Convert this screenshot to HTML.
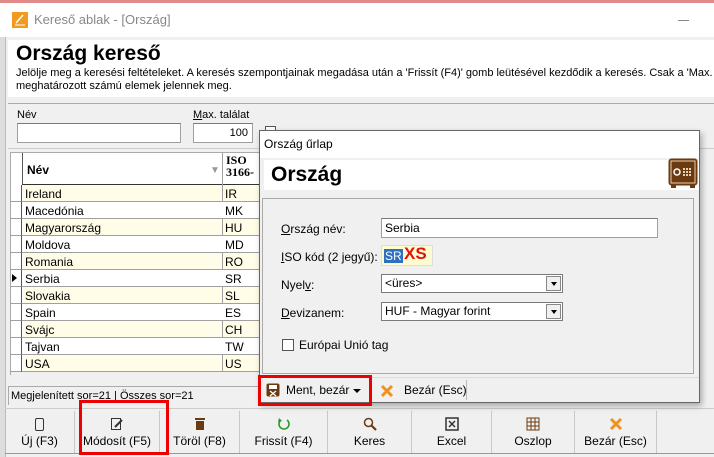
<!DOCTYPE html>
<html><head><meta charset="utf-8"><style>
*{box-sizing:border-box;margin:0;padding:0}
body{width:714px;height:457px;overflow:hidden;background:#f0f0f0;font-family:"Liberation Sans","DejaVu Sans",sans-serif;font-size:12px;color:#000;position:relative}
.a{position:absolute}
.inp{position:absolute;background:#fff;border:1px solid #a0a0a0;border-top-color:#7a7a7a}
.row{position:absolute;left:22px;width:243px;height:17px;border-bottom:1px solid #a0a0a0;font-size:12px;line-height:18px}
.row span{position:absolute;left:3px}
.row b{font-weight:normal;position:absolute;left:203px}
.ind{position:absolute;left:10px;width:12px;height:17px;border-bottom:1px solid #a0a0a0;border-right:1px solid #555}
.tb{position:absolute;top:411px;height:42px;text-align:center;font-size:12px;border-right:1px solid #c8c8c8}
.tb .ic{height:20px;margin-top:3px;display:flex;justify-content:center;align-items:center}
u{text-decoration:underline}
.sel{position:absolute;left:381px;width:182px;height:19px;background:#fff;border:1px solid #7a7a7a;padding-left:3px;line-height:17px}
.sel .dd{position:absolute;right:1px;top:1px;width:15px;height:15px;border:1px solid #888;background:#f0f0f0}
.sel .dd:after{content:"";position:absolute;left:4px;top:5px;border:3px solid transparent;border-top:4px solid #000}
</style></head><body>
<div class="a" style="left:0;top:0;width:714px;height:3px;background:#e08a8a"></div>
<div class="a" style="left:0;top:3px;width:714px;height:34px;background:#fff"></div>
<svg class="a" style="left:12px;top:12px" width="16" height="16"><rect width="16" height="16" fill="#f29a1e"/><path d="M4 11 L11 3" stroke="#fff" stroke-width="1.5"/><path d="M3 13 H13" stroke="#fff" stroke-width="1"/></svg>
<div class="a" style="left:34px;top:12px;color:#888;font-size:13px">Kereső ablak - [Ország]</div>
<div class="a" style="left:678px;top:20px;width:11px;height:1px;background:#888"></div>
<div class="a" style="left:0;top:37px;width:6px;height:420px;background:#ddd;border-right:1px solid #bbb"></div>
<div class="a" style="left:8px;top:40px;width:706px;height:57px;background:#fff"></div>
<div class="a" style="left:16px;top:42px;font-size:21px;font-weight:bold">Ország kereső</div>
<div class="a" style="left:16px;top:67px;font-size:11px;line-height:13px;white-space:nowrap">Jelölje meg a keresési feltételeket. A keresés szempontjainak megadása után a 'Frissít (F4)' gomb leütésével kezdődik a keresés. Csak a 'Max. találat<br>meghatározott számú elemek jelennek meg.</div>
<div class="a" style="left:8px;top:103px;width:706px;height:46px;border-top:1px solid #aaa;border-bottom:1px solid #ccc"></div>
<div class="a" style="left:17px;top:109px;font-size:11px">Név</div>
<div class="inp" style="left:17px;top:123px;width:164px;height:20px"></div>
<div class="a" style="left:193px;top:109px;font-size:11px"><u>M</u>ax. találat</div>
<div class="inp" style="left:193px;top:123px;width:60px;height:20px;text-align:right;padding:3px 4px;font-size:11px">100</div>
<div class="a" style="left:265px;top:126px;width:11px;height:11px;border:1px solid #555;background:#fff"></div>
<div class="a" style="left:10px;top:152px;width:256px;height:223px;background:#fff;border:1px solid #aaa"></div>
<div class="a" style="left:22px;top:153px;width:1px;height:32px;background:#555"></div>
<div class="a" style="left:22px;top:184px;width:244px;height:1px;background:#333"></div>
<div class="a" style="left:27px;top:163px;font-weight:bold;font-size:12px">Név</div>
<div class="a" style="left:210px;top:165px;color:#999;font-size:10px">▼</div>
<div class="a" style="left:222px;top:153px;width:1px;height:222px;background:#a0a0a0"></div>
<div class="a" style="left:226px;top:154px;font-weight:bold;font-family:'Liberation Serif',serif;font-size:12px;line-height:12px">ISO<br>3166-</div>
<div class="a" style="left:23px;top:185px;width:199px;height:187px;background:#fffde8"></div>
<div class="a" style="left:223px;top:185px;width:43px;height:187px;background:#fffde8"></div>
<div class="row" style="top:185px"><span>Ireland</span><b>IR</b></div><div class="ind" style="top:185px"></div>
<div class="row" style="top:202px;background:#fff"><span>Macedónia</span><b>MK</b></div><div class="ind" style="top:202px"></div>
<div class="row" style="top:219px"><span>Magyarország</span><b>HU</b></div><div class="ind" style="top:219px"></div>
<div class="row" style="top:236px;background:#fff"><span>Moldova</span><b>MD</b></div><div class="ind" style="top:236px"></div>
<div class="row" style="top:253px"><span>Romania</span><b>RO</b></div><div class="ind" style="top:253px"></div>
<div class="row" style="top:270px;background:#fff"><span>Serbia</span><b>SR</b></div><div class="ind" style="top:270px"><div class="a" style="left:2px;top:4px;border:4px solid transparent;border-left:5px solid #000"></div></div>
<div class="row" style="top:287px"><span>Slovakia</span><b>SL</b></div><div class="ind" style="top:287px"></div>
<div class="row" style="top:304px;background:#fff"><span>Spain</span><b>ES</b></div><div class="ind" style="top:304px"></div>
<div class="row" style="top:321px"><span>Svájc</span><b>CH</b></div><div class="ind" style="top:321px"></div>
<div class="row" style="top:338px;background:#fff"><span>Tajvan</span><b>TW</b></div><div class="ind" style="top:338px"></div>
<div class="row" style="top:355px"><span>USA</span><b>US</b></div><div class="ind" style="top:355px"></div>
<div class="a" style="left:11px;top:372px;width:254px;height:3px;background:#f0f0f0"></div>
<div class="a" style="left:8px;top:386px;width:260px;height:19px;border-top:1px solid #aaa;border-left:1px solid #aaa;font-size:11px;padding:3px 2px">Megjelenített sor=21 | Összes sor=21</div>
<div class="a" style="left:5px;top:408px;width:709px;height:1px;background:#ccc"></div>
<div class="a" style="left:5px;top:453px;width:709px;height:1px;background:#999"></div>
<div class="tb" style="left:5px;width:70px"><div class="ic"><div style="width:9px;height:13px;border:1.5px solid #333;border-radius:2px"></div></div>Új (F3)</div>
<div class="tb" style="left:75px;width:85px"><div class="ic"><svg width="14" height="14"><rect x="1.5" y="1.5" width="9" height="11" fill="none" stroke="#333"/><path d="M5 10 L12 3" stroke="#333" stroke-width="2"/></svg></div>Módosít (F5)</div>
<div class="tb" style="left:160px;width:80px"><div class="ic"><svg width="12" height="14"><rect x="1" y="1" width="10" height="2" fill="#6b3a10"/><rect x="2" y="4" width="8" height="9" fill="#6b3a10"/></svg></div>Töröl (F8)</div>
<div class="tb" style="left:240px;width:88px"><div class="ic"><svg width="14" height="14"><path d="M4 3 A5 5 0 1 0 10 3" fill="none" stroke="#2a9a2a" stroke-width="1.6"/><path d="M2 1 L5 4 L1 5Z" fill="#2a9a2a"/></svg></div>Frissít (F4)</div>
<div class="tb" style="left:328px;width:84px"><div class="ic"><svg width="14" height="14"><circle cx="5.5" cy="5.5" r="4" fill="none" stroke="#6b3a10" stroke-width="1.5"/><path d="M8.5 8.5L13 13" stroke="#6b3a10" stroke-width="2.2"/></svg></div>Keres</div>
<div class="tb" style="left:412px;width:80px"><div class="ic"><svg width="14" height="14"><rect x="1" y="1" width="12" height="12" fill="none" stroke="#333" stroke-width="1.5"/><path d="M4 4L10 10M10 4L4 10" stroke="#333" stroke-width="1.5"/></svg></div>Excel</div>
<div class="tb" style="left:492px;width:83px"><div class="ic"><svg width="14" height="14" stroke="#6b3a10" fill="none"><rect x="1" y="1" width="12" height="12"/><path d="M1 5H13M1 9H13M5 1V13M9 1V13"/></svg></div>Oszlop</div>
<div class="tb" style="left:575px;width:82px"><div class="ic"><svg width="14" height="14"><path d="M2 2L12 12M12 2L2 12" stroke="#f0901e" stroke-width="3"/></svg></div>Bezár (Esc)</div>
<div class="a" style="left:79px;top:400px;width:90px;height:55px;border:3px solid #e00"></div>

<div class="a" style="left:259px;top:130px;width:441px;height:273px;background:#f0f0f0;border:1px solid #666;box-shadow:2px 3px 6px rgba(0,0,0,.3)"></div>
<div class="a" style="left:260px;top:131px;width:439px;height:27px;background:#fff"></div>
<div class="a" style="left:264px;top:137px;font-size:12px">Ország űrlap</div>
<div class="a" style="left:264px;top:160px;width:435px;height:30px;background:#fff"></div>
<div class="a" style="left:271px;top:163px;font-size:21px;font-weight:bold">Ország</div>
<svg class="a" style="left:668px;top:158px" width="30" height="30"><rect x="0.5" y="0.5" width="29" height="27" rx="3" fill="#6b3a10"/><rect x="3" y="3" width="24" height="22" fill="none" stroke="#e8d0b0" stroke-width="1"/><circle cx="9" cy="14" r="3" fill="none" stroke="#fff" stroke-width="1.5"/><g fill="#e8d0b0"><rect x="15" y="10" width="2" height="2"/><rect x="18" y="10" width="2" height="2"/><rect x="21" y="10" width="2" height="2"/><rect x="15" y="13" width="2" height="2"/><rect x="18" y="13" width="2" height="2"/><rect x="21" y="13" width="2" height="2"/><rect x="15" y="16" width="2" height="2"/><rect x="18" y="16" width="2" height="2"/><rect x="21" y="16" width="2" height="2"/></g><rect x="3" y="27" width="5" height="3" fill="#6b3a10"/><rect x="22" y="27" width="5" height="3" fill="#6b3a10"/></svg>
<div class="a" style="left:262px;top:198px;width:432px;height:176px;border:1px solid #aaa"></div>
<div class="a" style="left:281px;top:222px"><u>O</u>rszág név:</div>
<div class="inp" style="left:381px;top:218px;width:277px;height:20px;padding:2px 3px">Serbia</div>
<div class="a" style="left:281px;top:250px"><u>I</u>SO kód (2 jegyű):</div>
<div class="a" style="left:381px;top:245px;width:52px;height:21px;background:#fffbd0;border:1px solid #ddd"></div>
<div class="a" style="left:384px;top:249px;background:#3070c0;color:#fff;font-size:12px;padding:0 1px">SR</div>
<div class="a" style="left:404px;top:244px;color:#e01010;font-weight:bold;font-size:17px">XS</div>
<div class="a" style="left:281px;top:278px">Nyel<u>v</u>:</div>
<div class="sel" style="top:274px">&lt;üres&gt;<div class="dd"></div></div>
<div class="a" style="left:281px;top:306px"><u>D</u>evizanem:</div>
<div class="sel" style="top:302px">HUF - Magyar forint<div class="dd"></div></div>
<div class="a" style="left:282px;top:339px;width:12px;height:12px;background:#fff;border:1px solid #555"></div>
<div class="a" style="left:299px;top:338px">Európai Unió tag</div>
<div class="a" style="left:260px;top:377px;width:439px;height:25px;border-top:1px solid #ddd"></div>
<svg class="a" style="left:266px;top:383px" width="14" height="14"><rect x="0.5" y="0.5" width="13" height="13" rx="2" fill="#6b3a10"/><rect x="3" y="2" width="8" height="4" fill="#fff"/><path d="M4 8L10 13M10 8L4 13" stroke="#fff" stroke-width="1.3"/></svg>
<div class="a" style="left:286px;top:383px">Ment, bezár</div>
<div class="a" style="left:353px;top:389px;border:4px solid transparent;border-top:4px solid #000"></div>
<div class="a" style="left:371px;top:380px;width:1px;height:20px;background:#bbb"></div>
<svg class="a" style="left:380px;top:384px" width="14" height="14"><path d="M2 2L12 12M12 2L2 12" stroke="#f0901e" stroke-width="3"/></svg>
<div class="a" style="left:404px;top:383px">Bezár (Esc)</div>
<div class="a" style="left:466px;top:380px;width:1px;height:20px;background:#bbb"></div>
<div class="a" style="left:258px;top:375px;width:114px;height:31px;border:3px solid #e00"></div>
</body></html>
